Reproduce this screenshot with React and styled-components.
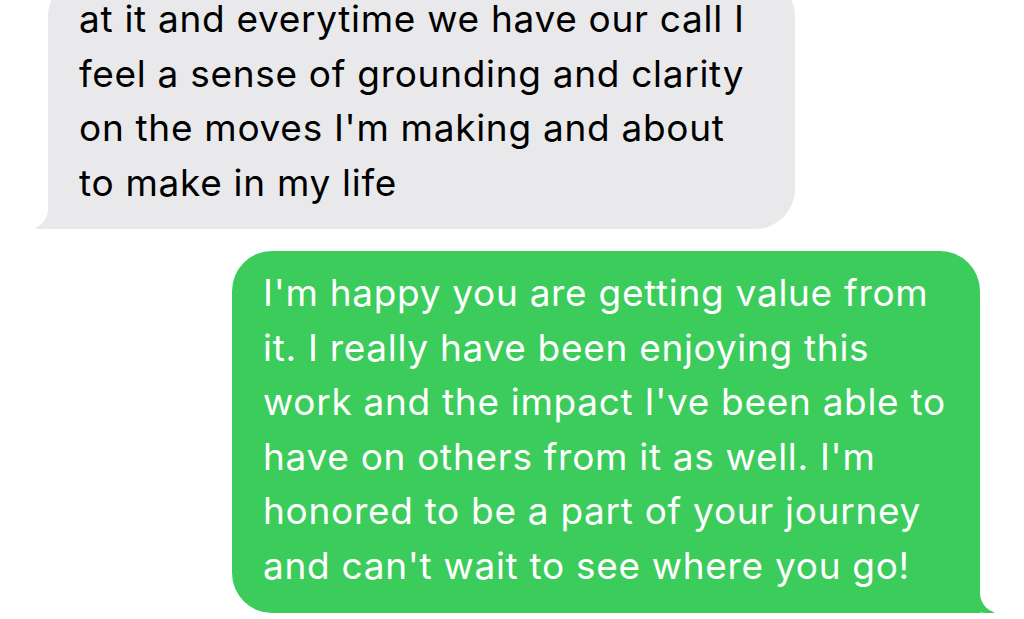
import React from "react";
import styled, { createGlobalStyle } from "styled-components";

const GlobalStyle = createGlobalStyle`
  html, body {
    margin: 0;
    padding: 0;
    background: #ffffff;
    overflow: hidden;
  }
  body {
    font-family: "Inter", "Liberation Sans", sans-serif;
  }
`;

const Thread = styled.div`
  width: 1024px;
  height: 619px;
  display: flex;
  flex-direction: column;
  gap: 22px;
  overflow: hidden;
`;

const Bubble = styled.div`
  position: relative;
  box-sizing: border-box;
  width: ${(p) => p.$width}px;
  font-size: 37px;
  line-height: 54.5px;
  letter-spacing: 0.7px;
  border-radius: 40px;
  white-space: nowrap;
  padding: 15px 30px 20px 31px;

  &::before,
  &::after {
    content: "";
    position: absolute;
    bottom: 0;
    height: 38px;
  }
`;

const Received = styled(Bubble)`
  align-self: flex-start;
  margin-left: 48px;
  margin-top: -24px;
  padding-top: 16px;
  padding-bottom: 19px;
  background: #e9e9eb;
  color: #000000;
  border-bottom-left-radius: 0;

  &::before {
    left: -12px;
    width: 38px;
    background: #e9e9eb;
    border-bottom-right-radius: 30px 26px;
  }
  &::after {
    left: -50px;
    width: 50px;
    background: #ffffff;
    border-bottom-right-radius: 20px;
  }
`;

const Sent = styled(Bubble)`
  align-self: flex-end;
  margin-right: 44px;
  background: #3bcc5b;
  color: #ffffff;
  border-bottom-right-radius: 0;

  &::before {
    right: -14px;
    width: 38px;
    background: #3bcc5b;
    border-bottom-left-radius: 30px 26px;
  }
  &::after {
    right: -50px;
    width: 50px;
    background: #ffffff;
    border-bottom-left-radius: 20px;
  }
`;

const Line = styled.div`
  position: relative;
  z-index: 1;
`;

const received = [
  "at it and everytime we have our call I",
  "feel a sense of grounding and clarity",
  "on the moves I'm making and about",
  "to make in my life",
];

const sent = [
  "I'm happy you are getting value from",
  "it. I really have been enjoying this",
  "work and the impact I've been able to",
  "have on others from it as well. I'm",
  "honored to be a part of your journey",
  "and can't wait to see where you go!",
];

export default function App() {
  return (
    <>
      <GlobalStyle />
      <Thread>
        <Received $width={747}>
          {received.map((t) => (
            <Line key={t}>{t}</Line>
          ))}
        </Received>
        <Sent $width={748}>
          {sent.map((t) => (
            <Line key={t}>{t}</Line>
          ))}
        </Sent>
      </Thread>
    </>
  );
}
